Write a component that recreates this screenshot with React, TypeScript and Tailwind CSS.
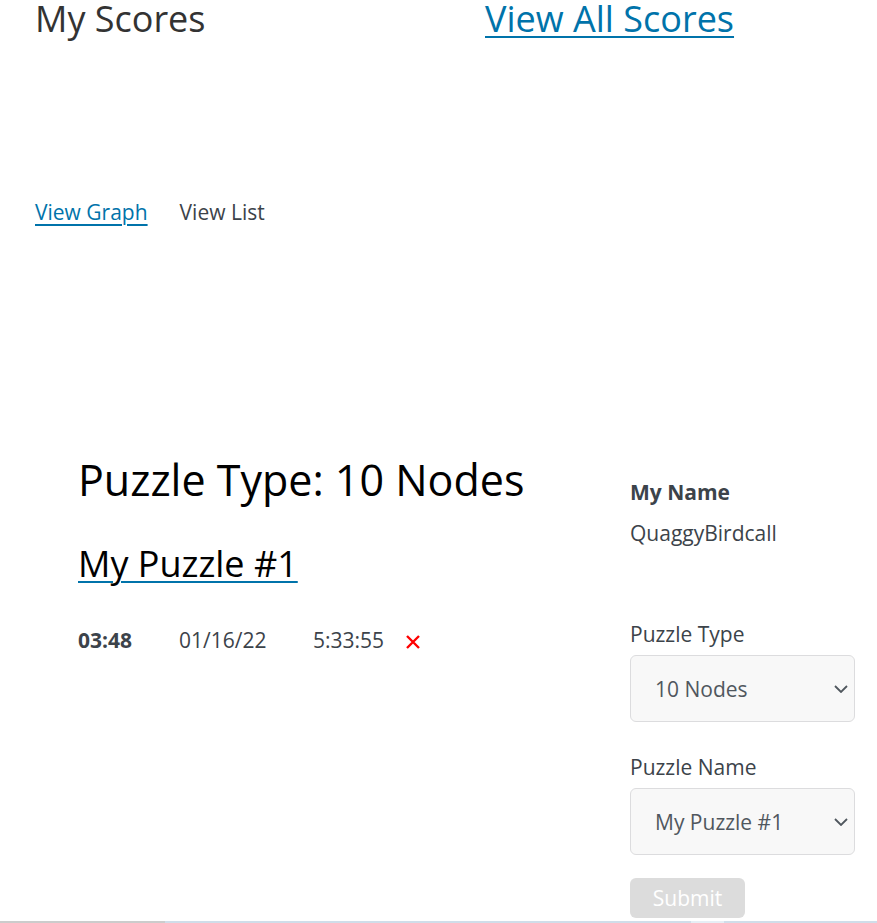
function Select({ value }: { value: string }) {
  return (
    <div className="flex h-[67px] w-[225px] items-center justify-between rounded-md border border-[#dcdcde] bg-[#f8f8f8] pl-6 pr-[6px] text-[21px] text-[#50575e]">
      <span>{value}</span>
      <svg width="14" height="8" viewBox="0 0 14 8" fill="none">
        <path d="M1 1L7 7L13 1" stroke="#50575e" strokeWidth="1.8" />
      </svg>
    </div>
  );
}

export default function App() {
  return (
    <div className="relative h-[923px] w-[877px] overflow-hidden bg-white font-['Open_Sans',sans-serif] text-[#3c434a]">
      {/* header */}
      <div className="flex items-start pl-[35px]">
        <h1 className="w-[450px] text-[36px] leading-[38px] text-[#333]">My Scores</h1>
        <a href="#" className="text-[36px] leading-[38px] text-[#0073aa] underline decoration-2 underline-offset-4">
          View All Scores
        </a>
      </div>

      {/* view toggle */}
      <div className="mt-[160px] flex gap-8 pl-[35px] text-[21px] leading-[28px]">
        <a href="#" className="text-[#0073aa] underline decoration-2 underline-offset-4">View Graph</a>
        <span>View List</span>
      </div>

      <div className="mt-[226px] flex">
        {/* scores */}
        <div className="w-[630px] pl-[78px]">
          <h2 className="text-[43px] leading-[56px] text-black">Puzzle Type: 10 Nodes</h2>
          <h3 className="mt-[34px] text-[36px] leading-[44px] text-black">
            <a href="#" className="underline decoration-[#0073aa] decoration-2 underline-offset-4">My Puzzle #1</a>
          </h3>
          <div className="mt-[40px] flex items-center text-[21px] leading-[28px]">
            <span className="w-[101px] font-bold">03:48</span>
            <span className="w-[134px]">01/16/22</span>
            <span className="w-[92px]">5:33:55</span>
            <svg width="16" height="16" viewBox="0 0 16 16" className="mt-1">
              <path d="M2 2L14 14M14 2L2 14" stroke="#ff0000" strokeWidth="2.4" />
            </svg>
          </div>
        </div>

        {/* filter */}
        <div className="flex flex-col pt-[26px] text-[21px] leading-[28px]">
          <span className="font-bold">My Name</span>
          <span className="mt-[13px]">QuaggyBirdcall</span>
          <span className="mt-[73px]">Puzzle Type</span>
          <div className="mt-[7px]">
            <Select value="10 Nodes" />
          </div>
          <span className="mt-[31px]">Puzzle Name</span>
          <div className="mt-[7px]">
            <Select value="My Puzzle #1" />
          </div>
          <button className="mt-[23px] h-[40px] w-[115px] rounded-md bg-[#dcdcdc] text-[21px] text-white">
            Submit
          </button>
        </div>
      </div>

      {/* bottom scroll strip */}
      <div className="absolute bottom-0 left-0 flex h-[2px] w-full">
        <div className="w-[165px] bg-[#cccccc]" />
        <div className="w-[526px] bg-[#d0dde9]" />
        <div className="w-[33px] bg-[#e6eef5]" />
        <div className="flex-1 bg-[#d0dde9]" />
      </div>
    </div>
  );
}
